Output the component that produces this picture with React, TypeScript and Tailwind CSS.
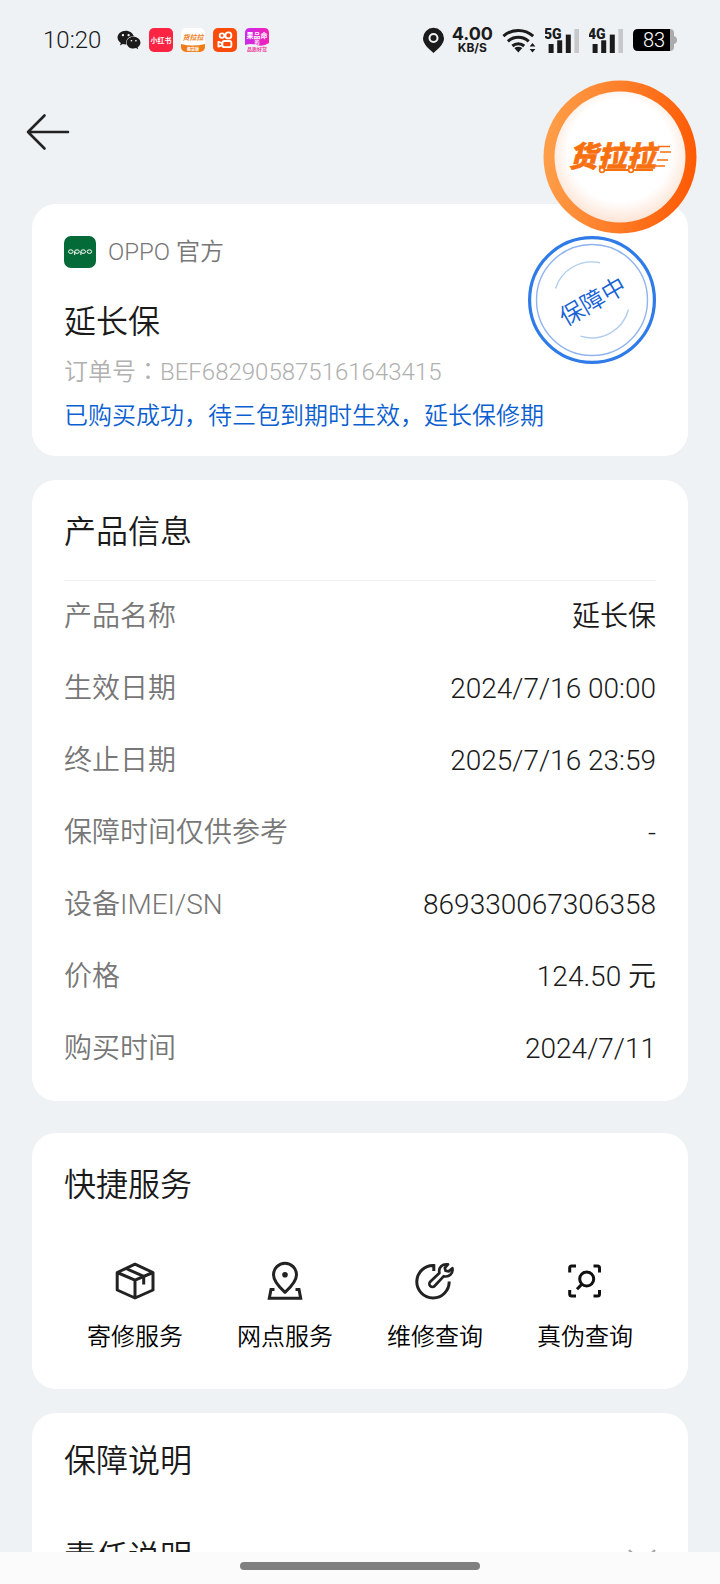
import type { ReactNode } from "react";
import { FaWeixin } from "react-icons/fa";

type Row = { label: string; value: string };

const rows: Row[] = [
  { label: "产品名称", value: "延长保" },
  { label: "生效日期", value: "2024/7/16 00:00" },
  { label: "终止日期", value: "2025/7/16 23:59" },
  { label: "保障时间仅供参考", value: "-" },
  { label: "设备IMEI/SN", value: "869330067306358" },
  { label: "价格", value: "124.50 元" },
  { label: "购买时间", value: "2024/7/11" },
];

const services: { label: string; icon: ReactNode }[] = [
  { label: "寄修服务", icon: <BoxIcon /> },
  { label: "网点服务", icon: <PlaceIcon /> },
  { label: "维修查询", icon: <RepairIcon /> },
  { label: "真伪查询", icon: <ScanIcon /> },
];

function BoxIcon() {
  return (
    <svg className="h-10 w-10" viewBox="0 0 40 40" fill="none" stroke="#222" strokeWidth={3} strokeLinejoin="round">
      <path d="M20 3.2 38 11.5V29L20 37 2.2 29V11.5ZM2.2 11.5 20 19.2 38 11.5M20 19.2V37" />
      <path d="M11 7.5 28.7 15.3V23.5" />
    </svg>
  );
}

function PlaceIcon() {
  return (
    <svg className="h-10 w-10" viewBox="0 0 40 40" fill="none" stroke="#222" strokeWidth={3}>
      <path d="M20 31.4C14 26 8.5 20.5 8.5 13.8a11.5 11.5 0 0 1 23 0C31.5 20.5 26 26 20 31.4Z" strokeLinejoin="round" />
      <circle cx="20" cy="13.8" r="2.8" fill="#222" stroke="none" />
      <path d="M9.5 28.5H6L4.3 37.2H35.7L34 28.5H30.5" />
    </svg>
  );
}

function RepairIcon() {
  return (
    <svg className="h-10 w-10" viewBox="0 0 40 40" fill="none" stroke="#222" strokeWidth={3}>
      <path d="M18.8 10V4.6A16.2 16.2 0 1 0 34.2 20.6" />
      <path
        strokeLinejoin="round"
        strokeWidth={2.7}
        d="M15.2 20.8 24.4 12C23.2 6.6 27.4 2.4 33 3.4L29.8 7 30.6 9.8 33.6 10.4 37.4 7.2C38.4 12.6 33.8 16.6 28.8 15.2L19.6 25A2.9 2.9 0 0 1 15.2 20.8Z"
      />
    </svg>
  );
}

function ScanIcon() {
  return (
    <svg className="h-10 w-10" viewBox="0 0 40 40" fill="none" stroke="#111" strokeWidth={3}>
      <path d="M4.7 11.5V7Q4.7 5 6.7 5H11M28.5 5H32.5Q34.5 5 34.5 7V11.5M34.5 29V33Q34.5 35 32.5 35H28.5M11 35H6.7Q4.7 35 4.7 33V29" />
      <circle cx="21.7" cy="18" r="7" />
      <path d="M17 23 12 28.2" />
    </svg>
  );
}

function SignalIcon({ name }: { name: string }) {
  return (
    <svg className="h-7 w-9" viewBox="0 0 36 28">
      <g fill="#1b1b1b">
        <rect x="3.6" y="18" width="5" height="9" />
        <rect x="12.2" y="14.3" width="5" height="12.7" />
        <rect x="20.8" y="8.6" width="5" height="18.4" />
        <text x="-1" y="12.6" fontSize="14" fontWeight="900" className="font-[Roboto,sans-serif]">
          {name}
        </text>
      </g>
      <rect x="29.4" y="3" width="4.6" height="24" fill="#c6c8ca" />
    </svg>
  );
}

function StatusBar() {
  return (
    <header className="flex h-20 shrink-0 items-center justify-between px-[43px] text-[#1b1b1b]">
      <div className="flex items-center gap-2">
        <span className="mr-2 text-2xl">10:20</span>
        <FaWeixin className="h-6 w-6" />
        <svg className="h-6 w-6" viewBox="0 0 24 24">
          <rect width="24" height="24" rx="5" fill="#fb2442" />
          <text x="12" y="15" fontSize="7" fontWeight="700" fill="#fff" textAnchor="middle">小红书</text>
        </svg>
        <svg className="h-6 w-6" viewBox="0 0 24 24">
          <clipPath id="van">
            <rect width="24" height="24" rx="5" />
          </clipPath>
          <g clipPath="url(#van)">
            <rect width="24" height="24" fill="#fff" />
            <path d="M0 16Q12 19 24 16V24H0Z" fill="#ef7d17" />
          </g>
          <text x="12" y="12" fontSize="7" fontWeight="700" fontStyle="italic" fill="#ef7d17" textAnchor="middle">货拉拉</text>
          <text x="12" y="23" fontSize="4" fontWeight="700" fill="#fff" textAnchor="middle">搬货版</text>
        </svg>
        <svg className="h-6 w-6" viewBox="0 0 24 24" fill="none" stroke="#fff" strokeWidth="1.8">
          <rect width="24" height="24" rx="5" fill="#fa4b0c" stroke="none" />
          <circle cx="9" cy="7.6" r="2.3" />
          <circle cx="15.4" cy="7.4" r="3" />
          <rect x="9.4" y="13" width="9" height="6.2" rx="2" />
          <path d="M9 15 5.4 13.8V18.6L9 17.4Z" strokeLinejoin="round" />
        </svg>
        <svg className="h-6 w-6" viewBox="0 0 24 24">
          <defs>
            <linearGradient id="shop" x1="0" y1="0" x2="1" y2="0">
              <stop offset="0" stopColor="#c92bea" />
              <stop offset="1" stopColor="#f51fb5" />
            </linearGradient>
          </defs>
          <path d="M5 0H19Q24 0 24 5V15Q18 19 12 17T0 17V5Q0 0 5 0Z" fill="url(#shop)" />
          <text x="12" y="10" fontSize="7" fontWeight="700" fill="#fff" textAnchor="middle">果品命</text>
          <text x="12" y="16" fontSize="5" fontWeight="700" fill="#fff" textAnchor="middle">的</text>
          <text x="12" y="23" fontSize="5" fontWeight="700" fill="#f0319a" textAnchor="middle">品质好货</text>
        </svg>
      </div>

      <div className="flex items-center gap-2">
        <svg className="h-7 w-[21px]" viewBox="1.5 0 21 28">
          <path d="M12 27C6 22 1.5 17.5 1.5 12.3a10.5 10.5 0 0 1 21 0C22.5 17.5 18 22 12 27Z" fill="#1b1b1b" />
          <circle cx="12" cy="12" r="4" fill="#1b1b1b" stroke="#eef2f5" strokeWidth="2" />
        </svg>
        <div className="flex flex-col items-center font-['Inter',sans-serif] font-bold">
          <span className="text-lg leading-4">4.00</span>
          <span className="text-xs leading-3">KB/S</span>
        </div>
        <svg className="h-7 w-9" viewBox="0 0 36 28" fill="none" stroke="#1b1b1b" strokeWidth="3">
          <path d="M2.4 10.2A22 22 0 0 1 32.2 10.2M6.9 15.4A15.4 15.4 0 0 1 27.7 15.4M11.4 20A9 9 0 0 1 23.2 20" />
          <path d="M17.3 26.4 13.3 22Q17.3 19.4 21.3 22Z" fill="#1b1b1b" stroke="none" />
          <path d="M31.5 17 34.4 20.6H28.6ZM31.5 26.6 34.4 23H28.6Z" fill="#1b1b1b" stroke="none" />
        </svg>
        <SignalIcon name="5G" />
        <SignalIcon name="4G" />
        <svg className="h-6 w-11" viewBox="0 0 44 24">
          <path d="M32 1H37Q41 1 41 5V8Q44 9 44 12T41 16V19Q41 23 37 23H32Z" fill="#a9abad" />
          <path d="M5 1H37V23H5Q0 23 0 18V6Q0 1 5 1Z" fill="#000" />
          <text x="21" y="19" fontSize="20" fill="#fff" textAnchor="middle">83</text>
        </svg>
      </div>
    </header>
  );
}

function Stamp() {
  return (
    <svg className="h-32 w-32 shrink-0" viewBox="0 0 128 128" fill="none">
      <circle cx="64" cy="64" r="62.4" stroke="#2f7be8" strokeWidth="3.2" />
      <circle cx="64" cy="64" r="55.5" stroke="#8fb4ef" strokeWidth="1.4" />
      <path d="M27.5 52.5A38 38 0 0 1 72 26.8M100.5 73.5A38 38 0 0 1 52.5 100.2" stroke="#b3cdee" strokeWidth="1.4" />
      <text x="64" y="74" fontSize="24" fill="#1763d6" textAnchor="middle" transform="rotate(-30 64 64)">
        保障中
      </text>
    </svg>
  );
}

function FloatingLogo() {
  return (
    <button type="button" aria-label="货拉拉" className="absolute right-[23px] top-20 z-10 h-[154px] w-[154px] rounded-full">
      <svg className="h-full w-full" viewBox="0 0 154 154">
        <defs>
          <linearGradient id="ring" x1="0" y1="0.4" x2="1" y2="0.5">
            <stop offset="0" stopColor="#ff9f4a" />
            <stop offset="1" stopColor="#ff5a05" />
          </linearGradient>
          <radialGradient id="face" cx="0.5" cy="0.45" r="0.56">
            <stop offset="0.7" stopColor="#fff" />
            <stop offset="1" stopColor="#fde3d3" />
          </radialGradient>
        </defs>
        <circle cx="77" cy="77" r="76.5" fill="url(#ring)" />
        <circle cx="77" cy="77" r="65.5" fill="url(#face)" />
        <text x="69" y="87" fontSize="29" fontWeight="900" fontStyle="italic" fill="#f8700f" stroke="#f8700f" strokeWidth="0.6" textAnchor="middle">
          货拉拉
        </text>
        <path d="M115 66.5H127M117 72H128M114 80H125M112 86H122" stroke="#f8700f" strokeWidth="1.4" />
        <path d="M62 90H85M91 90H110" stroke="#f8700f" strokeWidth="2" />
        <g fill="#fff" stroke="#f8700f" strokeWidth="1.6">
          <circle cx="59" cy="90" r="2.4" />
          <circle cx="88" cy="90" r="2.4" />
        </g>
      </svg>
    </button>
  );
}

export default function App() {
  return (
    <div className="relative flex h-screen flex-col overflow-hidden bg-[#eef2f5] font-['Roboto','Noto_Sans_CJK_SC',sans-serif] font-[350] text-[#1a1a1a]">
      <StatusBar />
      <FloatingLogo />

      <main className="flex min-h-0 flex-1 flex-col overflow-hidden px-8">
        <nav className="h-[124px] shrink-0 pt-8">
          <button type="button" aria-label="返回" className="-ml-2 block">
            <svg className="h-10 w-12" viewBox="0 0 48 40" fill="none" stroke="#222" strokeWidth="2.6" strokeLinecap="round" strokeLinejoin="round">
              <path d="M20.5 3.5 4 20 20.5 36.5M4 20H44" />
            </svg>
          </button>
        </nav>

        <section className="flex shrink-0 justify-between rounded-3xl bg-white px-8 pb-[18px] pt-8">
          <div className="whitespace-nowrap">
            <div className="flex h-8 items-center gap-3 text-2xl text-[#777]">
              <svg className="h-8 w-8" viewBox="0 0 32 32">
                <rect width="32" height="32" rx="7" fill="#046a38" />
                <g fill="none" stroke="#fff" strokeWidth="1">
                  <ellipse cx="6.8" cy="15.6" rx="2.3" ry="1.8" />
                  <ellipse cx="13" cy="15.6" rx="2.3" ry="1.8" />
                  <ellipse cx="19.2" cy="15.6" rx="2.3" ry="1.8" />
                  <ellipse cx="25.4" cy="15.6" rx="2.3" ry="1.8" />
                  <path d="M10.7 15.6V19M16.9 15.6V19" />
                </g>
              </svg>
              <span>OPPO 官方</span>
            </div>
            <h1 className="mt-7 text-[32px] leading-13">延长保</h1>
            <p className="text-2xl leading-11 text-[#b0b0b0]">
              订单号<span className="font-['Noto_Sans_CJK_TC',sans-serif]" lang="zh-TW">：</span>BEF682905875161643415
            </p>
            <p className="text-2xl leading-11 text-[#0b5fd0]">已购买成功，待三包到期时生效，延长保修期</p>
          </div>
          <div className="-ml-32">
            <Stamp />
          </div>
        </section>

        <section className="mt-6 shrink-0 rounded-3xl bg-white px-8 pb-4">
          <h2 className="border-b border-[#efefef] pb-5 pt-6 text-[32px] leading-14">产品信息</h2>
          <dl>
            {rows.map((row) => (
              <div key={row.label} className="flex h-18 items-center justify-between text-[28px]">
                <dt className="text-[#777]">{row.label}</dt>
                <dd>{row.value}</dd>
              </div>
            ))}
          </dl>
        </section>

        <section className="mt-8 shrink-0 rounded-3xl bg-white px-7 pb-8">
          <h2 className="px-1 pb-5 pt-6 text-[32px] leading-14">快捷服务</h2>
          <div className="mt-7 grid grid-cols-4">
            {services.map((service) => (
              <button key={service.label} type="button" className="flex flex-col items-center gap-4 text-2xl leading-10 text-black">
                {service.icon}
                <span>{service.label}</span>
              </button>
            ))}
          </div>
        </section>

        <section className="mt-6 shrink-0 rounded-t-3xl bg-white px-8">
          <h2 className="py-6 text-[32px] leading-12">保障说明</h2>
          <button type="button" className="flex h-24 w-full items-center justify-between text-[32px]">
            <span>责任说明</span>
            <svg className="h-7 w-7" viewBox="0 0 28 28" fill="none" stroke="#aaa" strokeWidth="2.4">
              <path d="M1 7 14 20 27 7" />
            </svg>
          </button>
        </section>
      </main>

      <footer className="flex h-8 shrink-0 items-center justify-center bg-[#fbfbfb] pb-1">
        <div className="h-2 w-60 rounded-full bg-[#808080]" />
      </footer>
    </div>
  );
}
